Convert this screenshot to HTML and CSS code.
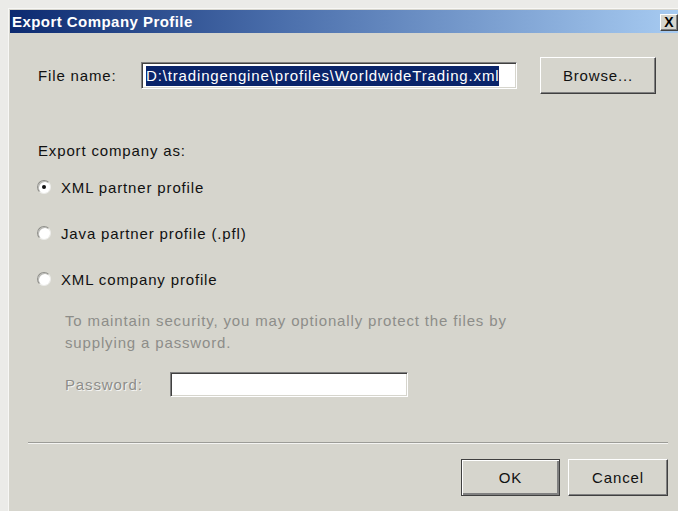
FILE: index.html
```html
<!DOCTYPE html>
<html lang="en">
<head>
<meta charset="utf-8">
<title>Export Company Profile</title>
<link rel="stylesheet" href="styles.css">
</head>
<body>
<div class="window">
  <div class="titlebar">
    <span class="title">Export Company Profile</span>
    <button class="close" type="button">X</button>
  </div>

  <div class="content">
    <div class="file-row">
      <span class="label file-label">File name:</span>
      <div class="field file-field"><span class="selection">D:\tradingengine\profiles\WorldwideTrading.xml</span></div>
      <button class="btn browse" type="button">Browse...</button>
    </div>

    <div class="group-label">Export company as:</div>

    <div class="options">
      <div class="option"><span class="radio checked"></span><span>XML partner profile</span></div>
      <div class="option"><span class="radio"></span><span>Java partner profile (.pfl)</span></div>
      <div class="option"><span class="radio"></span><span>XML company profile</span></div>
    </div>

    <div class="hint">To maintain security, you may optionally protect the files by<br>supplying a password.</div>

    <div class="password-row">
      <span class="disabled-label">Password:</span>
      <div class="field password-field"></div>
    </div>
  </div>

  <div class="separator"></div>

  <div class="actions">
    <button class="btn default" type="button">OK</button>
    <button class="btn cancel" type="button">Cancel</button>
  </div>
</div>
</body>
</html>
```

FILE: styles.css
```css
html {
  overflow: hidden;
  background: #ebebe8;
}

body {
  margin: 8px 0 0 8px;
  font-family: "Liberation Sans", Arial, sans-serif;
  font-size: 15px;
  letter-spacing: 0.85px;
  color: #111;
}

/* dialog frame */
.window {
  width: 674px;
  height: 520px;
  background: #d6d5cd;
  border-left: 1px solid #f7f7f5;
  border-top: 1px solid #f7f7f5;
  padding: 1px 1px 0 1px;
}

/* caption bar */
.titlebar {
  height: 23px;
  display: flex;
  align-items: center;
  justify-content: space-between;
  background: linear-gradient(to right, #0c2a70 0%, #4a6eab 40%, #a8ccf2 100%);
  padding: 0 6px 0 2px;
}

.title {
  color: #fff;
  font-weight: bold;
  font-size: 15px;
  letter-spacing: 0.45px;
}

.close {
  width: 18px;
  height: 17px;
  padding: 0;
  margin-top: 1px;
  background: #d6d5cd;
  border: 1px solid;
  border-color: #fff #404040 #404040 #fff;
  box-shadow: inset -1px -1px 0 #808080;
  font-family: "Liberation Sans", Arial, sans-serif;
  font-weight: bold;
  font-size: 14px;
  line-height: 14px;
  color: #000;
  letter-spacing: 0;
}

.content {
  padding: 24px 0 0 28px;
}

/* file name row */
.file-row {
  display: flex;
  align-items: center;
  height: 37px;
}

.file-label {
  width: 103px;
}

.field {
  background: #fff;
  border: 1px solid;
  border-color: #808080 #fff #fff #808080;
  box-shadow: inset 1px 1px 0 #404040, inset -1px -1px 0 #d6d5cd;
  box-sizing: border-box;
}

.file-field {
  width: 376px;
  height: 27px;
  padding: 3px 0 0 4px;
  overflow: hidden;
  white-space: nowrap;
}

.selection {
  display: inline-block;
  height: 20px;
  line-height: 20px;
  background: #0a246a;
  color: #fff;
  letter-spacing: 0.85px;
}

.btn {
  height: 37px;
  background: #d6d5cd;
  border: 1px solid;
  border-color: #fff #404040 #404040 #fff;
  box-shadow: inset -1px -1px 0 #808080;
  font-family: "Liberation Sans", Arial, sans-serif;
  font-size: 15px;
  letter-spacing: 0.85px;
  color: #111;
  padding: 0;
}

.browse {
  width: 116px;
  margin-left: 23px;
}

/* export format choices */
.group-label {
  margin-top: 47px;
  line-height: 20px;
}

.options {
  display: flex;
  flex-direction: column;
  gap: 22px;
  margin-top: 14px;
}

.option {
  display: flex;
  align-items: center;
  height: 24px;
}

.radio {
  width: 14px;
  height: 14px;
  box-sizing: border-box;
  border-radius: 50%;
  background: #fff;
  border: 1px solid;
  border-color: #8e8e89 #ecece9 #ecece9 #8e8e89;
  box-shadow: inset 1px 1px 0 #b9b9b4;
  margin: 0 10px 0 -1px;
  position: relative;
}

.radio.checked::after {
  content: "";
  position: absolute;
  left: 4px;
  top: 4px;
  width: 4px;
  height: 4px;
  border-radius: 50%;
  background: #111;
}

/* password protection (disabled) */
.hint {
  margin: 19px 0 0 27px;
  line-height: 22px;
  color: #8d8d89;
}

.password-row {
  display: flex;
  align-items: center;
  margin: 18px 0 0 27px;
  height: 25px;
}

.disabled-label {
  width: 105px;
  color: #8d8d89;
  text-shadow: 1px 1px 0 #f4f4f2;
}

.password-field {
  width: 238px;
  height: 25px;
}

.separator {
  margin: 45px 0 0 18px;
  width: 640px;
  height: 1px;
  background: #9c9c97;
  border-bottom: 1px solid #f4f4f2;
}

/* dialog buttons */
.actions {
  display: flex;
  gap: 8px;
  margin: 15px 0 0 451px;
}

.default {
  width: 99px;
  border-color: #404040;
  box-shadow: inset 1px 1px 0 #fff, inset -2px -2px 0 #808080;
}

.cancel {
  width: 100px;
}
```
